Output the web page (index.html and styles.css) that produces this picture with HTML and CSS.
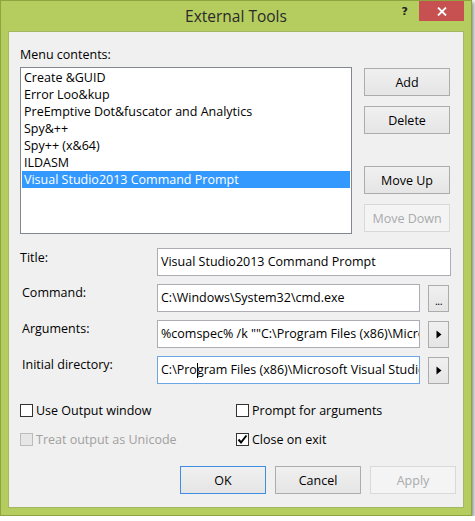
FILE: index.html
```html
<!DOCTYPE html>
<html lang="en">
<head>
    <meta charset="UTF-8">
    <title>External Tools</title>
    <link rel="stylesheet" href="styles.css">
</head>
<body>
    <div class="window">
        <div class="titlebar">
            <div class="title">External Tools</div>
            <div class="controls">
                <span class="help">?</span>
                <button class="close" type="button">
                    <svg width="10" height="9" viewBox="0 0 10 9"><path d="M1 0.5 L9 8.5 M9 0.5 L1 8.5" stroke="#fff" stroke-width="1.8"/></svg>
                </button>
            </div>
        </div>

        <div class="client">
            <div class="menu-label">Menu contents:</div>
            <div class="top">
                <ul class="listbox">
                    <li>Create &amp;GUID</li>
                    <li>Error Loo&amp;kup</li>
                    <li>PreEmptive Dot&amp;fuscator and Analytics</li>
                    <li>Spy&amp;++</li>
                    <li>Spy++ (x&amp;64)</li>
                    <li>ILDASM</li>
                    <li class="selected">Visual Studio2013 Command Prompt</li>
                </ul>
                <div class="side-buttons">
                    <button class="btn" type="button">Add</button>
                    <button class="btn" type="button">Delete</button>
                    <button class="btn move-up" type="button">Move Up</button>
                    <button class="btn" type="button" disabled>Move Down</button>
                </div>
            </div>

            <div class="fields">
                <label class="field-label title-label">Title:</label>
                <div class="field wide">Visual Studio2013 Command Prompt</div>

                <label class="field-label">Command:</label>
                <div class="field">C:\Windows\System32\cmd.exe</div>
                <button class="small-btn dots" type="button">...</button>

                <label class="field-label">Arguments:</label>
                <div class="field">%comspec% /k ""C:\Program Files (x86)\Microsoft Visual Studio 12.0\Common7\Tools\VsDevCmd.bat""</div>
                <button class="small-btn" type="button">
                    <svg width="6" height="9" viewBox="0 0 6 9"><path d="M0.5 0.5 L5.5 4.5 L0.5 8.5 Z" fill="#000"/></svg>
                </button>

                <label class="field-label">Initial directory:</label>
                <div class="field focused">C:\Pro<span class="caret"></span>gram Files (x86)\Microsoft Visual Studio 12.0\Common7\Tools\</div>
                <button class="small-btn" type="button">
                    <svg width="6" height="9" viewBox="0 0 6 9"><path d="M0.5 0.5 L5.5 4.5 L0.5 8.5 Z" fill="#000"/></svg>
                </button>
            </div>

            <div class="checks">
                <div class="check"><span class="box"></span>Use Output window</div>
                <div class="check"><span class="box"></span>Prompt for arguments</div>
                <div class="check disabled"><span class="box"></span>Treat output as Unicode</div>
                <div class="check">
                    <span class="box"><svg width="11" height="11" viewBox="0 0 11 11"><path d="M1.5 5.5 L4 8.5 L9.5 1.5" stroke="#000" stroke-width="2" fill="none"/></svg></span>Close on exit
                </div>
            </div>

            <div class="footer">
                <button class="btn default" type="button">OK</button>
                <button class="btn" type="button">Cancel</button>
                <button class="btn" type="button" disabled>Apply</button>
            </div>
        </div>
    </div>
</body>
</html>
```

FILE: styles.css
```css
body {
    margin: 0;
    background: #fff;
    font-family: "Open Sans", "Noto Sans", sans-serif;
    font-size: 12.5px;
    color: #000;
}

.window {
    width: 472px;
    height: 516px;
    box-sizing: border-box;
    border: 1px solid #8ea43f;
    background: #b5cd5f;
    padding: 0 7px 7px;
    box-shadow: 2px 2px 4px rgba(0, 0, 0, 0.45);
    display: flex;
    flex-direction: column;
}

.titlebar {
    height: 30px;
    display: grid;
    grid-template-columns: 1fr auto 1fr;
}

.title {
    grid-column: 2;
    font-size: 15.5px;
    line-height: 30px;
    color: #2a2a2a;
}

.controls {
    grid-column: 3;
    display: flex;
    justify-content: flex-end;
    align-items: flex-start;
}

.help {
    font-family: "DejaVu Sans", sans-serif;
    font-weight: bold;
    font-size: 11px;
    line-height: 12px;
    color: #222;
    margin: 5px 11px 0 0;
}

.close {
    width: 45px;
    height: 20px;
    border: none;
    padding: 0;
    background: #c75050;
    display: flex;
    align-items: center;
    justify-content: center;
}

.client {
    flex: 1;
    background: #f0f0f0;
    border: 1px solid #a2b862;
    padding: 0 0 0 11px;
}

.menu-label {
    margin-top: 14px;
    line-height: 17px;
}

.top {
    display: flex;
    gap: 12px;
    margin-top: 4px;
}

.listbox {
    list-style: none;
    margin: 0;
    width: 332px;
    height: 167px;
    box-sizing: border-box;
    padding: 1px;
    border: 1px solid #828790;
    background: #fff;
}

.listbox li {
    height: 17px;
    line-height: 17px;
    padding-left: 2px;
    white-space: nowrap;
}

.listbox .selected {
    background: #3399ff;
    color: #fff;
}

.side-buttons {
    display: flex;
    flex-direction: column;
    gap: 10px;
    padding-top: 1px;
}

.side-buttons .move-up {
    margin-top: 22px;
}

.btn {
    width: 86px;
    height: 28px;
    font: inherit;
    color: #000;
    border: 1px solid #acacac;
    background: linear-gradient(#f0f0f0, #e5e5e5);
    padding: 0;
}

.btn:disabled {
    color: #a8abad;
    border-color: #d9d9d9;
    background: #f4f4f4;
}

.btn.default {
    border-color: #3d8ee0;
}

.fields {
    display: grid;
    grid-template-columns: 129px 263px 23px;
    column-gap: 8px;
    row-gap: 8px;
    margin-top: 14px;
    align-items: start;
}

.field-label {
    line-height: 17px;
    padding-left: 2px;
    white-space: nowrap;
}

.title-label {
    padding-left: 0;
    padding-top: 1px;
}

.field {
    height: 28px;
    box-sizing: border-box;
    border: 1px solid #abadb3;
    background: #fff;
    padding: 0 3px;
    line-height: 26px;
    white-space: nowrap;
    overflow: hidden;
}

.field.wide {
    grid-column: 2 / 4;
}

.field.focused {
    border-color: #6ca6e6;
}

.caret {
    display: inline-block;
    width: 0;
    height: 15px;
    border-left: 1px solid #000;
    margin-right: -1px;
    vertical-align: -4px;
}

.small-btn {
    width: 21px;
    height: 27px;
    margin-top: 1px;
    border: 1px solid #acacac;
    background: linear-gradient(#f0f0f0, #e5e5e5);
    padding: 0;
    font: inherit;
    display: flex;
    align-items: center;
    justify-content: center;
}

.small-btn.dots {
    font-size: 11px;
    padding-top: 4px;
    letter-spacing: -0.5px;
}

.checks {
    display: grid;
    grid-template-columns: 216px 1fr;
    row-gap: 9px;
    margin-top: 16px;
}

.check {
    display: flex;
    align-items: center;
    height: 20px;
    white-space: nowrap;
}

.box {
    width: 13px;
    height: 13px;
    box-sizing: border-box;
    border: 1px solid #333;
    background: #fff;
    margin-right: 3px;
    display: flex;
    align-items: center;
    justify-content: center;
}

.check.disabled {
    color: #a0a0a0;
}

.check.disabled .box {
    border-color: #bcbcbc;
    background: #e6e6e6;
}

.footer {
    display: flex;
    justify-content: flex-end;
    gap: 9px;
    margin-top: 17px;
    padding-right: 7px;
}
```
